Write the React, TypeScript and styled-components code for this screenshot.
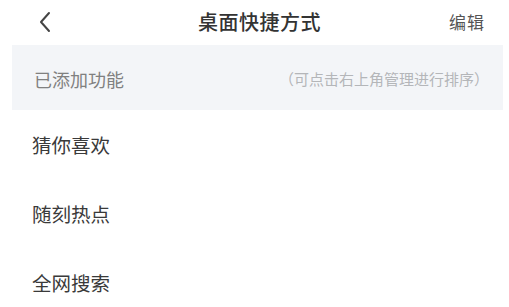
import React from "react";
import styled, { createGlobalStyle } from "styled-components";

const Global = createGlobalStyle`
  html, body { margin: 0; padding: 0; background: #ffffff; }
  body { font-family: "Noto Sans CJK SC", "Noto Sans", sans-serif; }
`;

const Page = styled.div`
  width: 509px;
  height: 307px;
  overflow: hidden;
  background: #fff;
  display: flex;
  flex-direction: column;
`;

const Header = styled.div`
  flex: 0 0 45px;
  display: grid;
  grid-template-columns: 1fr auto 1fr;
  align-items: center;
  padding: 0 24px 0 38px;
`;

const Back = styled.button`
  justify-self: start;
  border: 0;
  background: none;
  padding: 0;
  display: flex;
  align-items: center;
  margin-top: -2px;
`;

const Title = styled.div`
  font-size: 20px;
  font-weight: 500;
  color: #333;
  letter-spacing: 0.5px;
  margin-top: -2px;
  margin-right: 4px;
`;

const Edit = styled.div`
  justify-self: end;
  font-size: 17px;
  color: #555;
  letter-spacing: 1px;
  margin-top: -2px;
`;

const Section = styled.div`
  flex: 0 0 65px;
  margin: 0 6px 0 12px;
  background: #f3f5f8;
  display: flex;
  align-items: center;
  justify-content: space-between;
  padding: 0 14px 0 22px;
`;

const SectionTitle = styled.div`
  font-size: 18px;
  color: #808080;
  margin-top: 2px;
`;

const Hint = styled.div`
  font-size: 15px;
  color: #b4b6b9;
  margin-top: 2px;
`;

const List = styled.div`
  flex: 0 0 auto;
  display: flex;
  flex-direction: column;
`;

const Item = styled.div`
  flex: 0 0 70px;
  display: flex;
  align-items: center;
  padding-left: 32px;
  font-size: 19.5px;
  color: #3a3a3a;
  margin-top: -1px;
`;

export default function App() {
  const items = ["猜你喜欢", "随刻热点", "全网搜索"];
  return (
    <>
      <Global />
      <Page>
        <Header>
          <Back aria-label="返回">
            <svg width="14" height="22" viewBox="0 0 14 22">
              <path d="M11 2 L3 11 L11 20" fill="none" stroke="#444" strokeWidth="2" strokeLinecap="round" strokeLinejoin="round" />
            </svg>
          </Back>
          <Title>桌面快捷方式</Title>
          <Edit>编辑</Edit>
        </Header>
        <Section>
          <SectionTitle>已添加功能</SectionTitle>
          <Hint>（可点击右上角管理进行排序）</Hint>
        </Section>
        <List>
          {items.map((t) => (
            <Item key={t}>{t}</Item>
          ))}
        </List>
      </Page>
    </>
  );
}
